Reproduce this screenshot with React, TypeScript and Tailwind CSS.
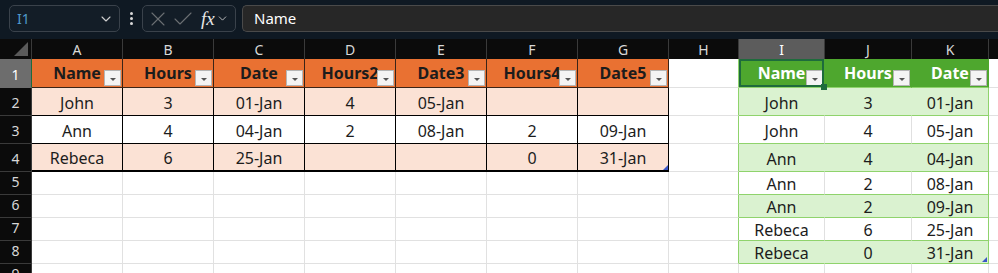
import React from "react";
import { ChevronDown, X, Check } from "lucide-react";

type Col = { key: string; w: string };

const cols: Col[] = [
  { key: "A", w: "w-[91px]" },
  { key: "B", w: "w-[91px]" },
  { key: "C", w: "w-[91px]" },
  { key: "D", w: "w-[91px]" },
  { key: "E", w: "w-[91px]" },
  { key: "F", w: "w-[91px]" },
  { key: "G", w: "w-[91px]" },
  { key: "H", w: "w-[70px]" },
  { key: "I", w: "w-[86px]" },
  { key: "J", w: "w-[87px]" },
  { key: "K", w: "w-[77px]" },
];

const rowHeights = ["h-[29px]", "h-[28px]", "h-[28px]", "h-[28px]", "h-[23px]", "h-[23px]", "h-[23px]", "h-[23px]", "h-[23px]"];

const left = [
  ["Name", "Hours", "Date", "Hours2", "Date3", "Hours4", "Date5"],
  ["John", "3", "01-Jan", "4", "05-Jan", "", ""],
  ["Ann", "4", "04-Jan", "2", "08-Jan", "2", "09-Jan"],
  ["Rebeca", "6", "25-Jan", "", "", "0", "31-Jan"],
];

const right = [
  ["Name", "Hours", "Date"],
  ["John", "3", "01-Jan"],
  ["John", "4", "05-Jan"],
  ["Ann", "4", "04-Jan"],
  ["Ann", "2", "08-Jan"],
  ["Ann", "2", "09-Jan"],
  ["Rebeca", "6", "25-Jan"],
  ["Rebeca", "0", "31-Jan"],
];

const FilterButton = () => (
  <span className="absolute right-px bottom-px w-[17px] h-[16px] bg-[#f4f4f4] border border-[#b5b5b5] flex items-center justify-center">
    <span className="mt-[3px] w-0 h-0 border-l-[3px] border-r-[3px] border-t-[3px] border-l-transparent border-r-transparent border-t-[#555]" />
  </span>
);

const Cell: React.FC<{ r: number; c: number }> = ({ r, c }) => {
  // left table A1:G4
  if (r < 4 && c < 7) {
    const text = left[r][c];
    if (r === 0) {
      return (
        <div className="relative h-full w-full bg-[#e97132] border-r border-b border-[#3b2518] flex items-center justify-center overflow-hidden">
          <span className="font-bold text-[16px] text-[#1c1c1c] whitespace-nowrap">{text}</span>
          <FilterButton />
        </div>
      );
    }
    const fill = r === 2 ? "bg-white" : "bg-[#fbe2d5]";
    const bottom = r === 3 ? "border-b-2" : "border-b";
    return (
      <div className={`relative h-full w-full ${fill} border-r ${bottom} border-black flex items-center justify-center pt-[2px]`}>
        <span className="text-[16px] text-[#1c1c1c]">{text}</span>
        {r === 3 && c === 6 && (
          <span className="absolute right-0 bottom-0 w-0 h-0 border-l-[5px] border-t-[5px] border-l-transparent border-t-transparent border-b-[5px] border-b-[#3a56c6]" />
        )}
      </div>
    );
  }
  // right table I1:K8
  if (r < 8 && c >= 8) {
    const text = right[r][c - 8];
    const vr = c === 10 ? "border-r-[#8fd36c]" : r % 2 === 1 ? "border-r-[#daf2d0]" : "border-r-[#e0e0e0]";
    if (r === 0) {
      return (
        <div className={`relative h-full w-full bg-[#4ea72e] border-r border-b border-r-[#4ea72e] border-b-[#8fd36c] flex items-center justify-center ${c === 8 ? "" : "overflow-hidden"}`}>
          <span className="font-bold text-[16px] text-white whitespace-nowrap">{text}</span>
          <FilterButton />
          {c === 8 && (
            <>
              <span className="absolute inset-0 border-2 border-[#1e6b3c]" />
              <span className="absolute -right-[3px] -bottom-[3px] w-[6px] h-[6px] bg-[#1e6b3c]" />
            </>
          )}
        </div>
      );
    }
    const fill = r % 2 === 1 ? "bg-[#daf2d0]" : "bg-white";
    return (
      <div className={`relative h-full w-full ${fill} border-r border-b ${vr} border-b-[#8fd36c] flex items-center justify-center pt-[2px]`}>
        <span className="text-[16px] text-[#1c1c1c]">{text}</span>
        {r === 7 && c === 10 && (
          <span className="absolute right-px bottom-px w-0 h-0 border-l-[5px] border-t-[5px] border-l-transparent border-t-transparent border-b-[5px] border-b-[#3a56c6]" />
        )}
      </div>
    );
  }
  const edge = c === 7 && r < 8 ? "border-r-[#8fd36c]" : "border-r-[#e1e1e1]";
  return <div className={`h-full w-full bg-white border-r border-b ${edge} border-b-[#e1e1e1]`} />;
};

export default function App() {
  return (
    <div className="w-[998px] h-[273px] overflow-hidden bg-white font-['Noto_Sans',sans-serif] select-none">
      {/* Formula bar */}
      <div className="h-[39px] bg-[#0f1923] flex items-center pl-[9px] gap-[6px] pb-[2px]">
        <div className="w-[111px] h-[27px] rounded-[5px] border border-[#3a424b] bg-[#131d27] flex items-center justify-between pl-[7px] pr-[5px]">
          <span className="text-[14px] text-[#4f9acb]">I1</span>
          <ChevronDown size={16} color="#cfcfcf" strokeWidth={1.6} />
        </div>
        <div className="w-[10px] flex flex-col items-center gap-[2px]">
          <span className="w-[3px] h-[3px] rounded-full bg-[#d8d8d8]" />
          <span className="w-[3px] h-[3px] rounded-full bg-[#d8d8d8]" />
          <span className="w-[3px] h-[3px] rounded-full bg-[#d8d8d8]" />
        </div>
        <div className="w-[94px] h-[27px] rounded-[5px] border border-[#3a424b] bg-[#131d27] flex items-center pl-[3px]">
          <X size={24} color="#6b6f73" strokeWidth={1.1} />
          <Check size={24} color="#6b6f73" strokeWidth={1.1} className="ml-[1px]" />
          <span className="ml-[6px] font-['Liberation_Serif',serif] italic text-[19px] text-[#e6e6e6] leading-none">fx</span>
          <ChevronDown size={13} color="#cfcfcf" strokeWidth={1.6} className="ml-px" />
        </div>
        <div className="flex-1 h-[27px] rounded-l-[5px] border border-r-0 border-[#4a4a4a] bg-[#272727] flex items-center pl-[11px]">
          <span className="text-[15px] text-white">Name</span>
        </div>
      </div>

      {/* Column headers */}
      <div className="h-[20px] bg-[#0b0b0b] flex">
        <div className="w-[32px] h-full border-r border-[#3a3a3a] relative">
          <svg className="absolute right-[3px] bottom-[3px]" width="14" height="14" viewBox="0 0 14 14">
            <polygon points="14,0 14,14 0,14" fill="#5a5a5a" />
          </svg>
        </div>
        {cols.map((col) => (
          <div
            key={col.key}
            className={`${col.w} shrink-0 h-full border-r border-[#3a3a3a] flex items-center justify-center text-[14px] ${
              col.key === "I" ? "bg-[#5c5c5c] text-white" : "text-[#d8d8d8]"
            }`}
          >
            {col.key}
          </div>
        ))}
        <div className="flex-1" />
      </div>

      {/* Rows */}
      {rowHeights.map((h, r) => (
        <div key={r} className={`${h} flex`}>
          <div
            className={`w-[32px] shrink-0 h-full border-b border-r flex items-end justify-center pb-[2px] text-[14px] ${
              r === 0
                ? "bg-[#6d6d6d] text-white border-b-[#6d6d6d] border-r-[#1e6b3c]"
                : "bg-[#0b0b0b] text-[#d8d8d8] border-b-[#3a3a3a] border-r-[#3a3a3a]"
            }`}
          >
            {r + 1}
          </div>
          {cols.map((col, c) => (
            <div key={col.key} className={`${col.w} shrink-0 h-full ${r === 0 && c === 8 ? "relative z-10" : ""}`}>
              <Cell r={r} c={c} />
            </div>
          ))}
          <div className="flex-1 h-full bg-white border-b border-[#e1e1e1]" />
        </div>
      ))}
    </div>
  );
}
